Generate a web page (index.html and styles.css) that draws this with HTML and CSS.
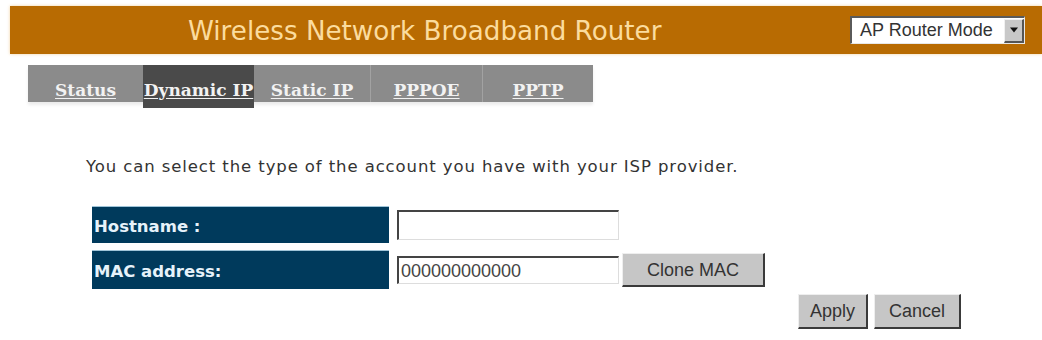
FILE: index.html
```html
<!DOCTYPE html>
<html>
<head>
<meta charset="utf-8">
<link rel="stylesheet" href="styles.css">
</head>
<body>
<div class="header">
  <div class="title">Wireless Network Broadband Router</div>
  <div class="mode-select">
    <span class="mode-text">AP Router Mode</span>
    <span class="mode-arrow"><svg width="10" height="6" viewBox="0 0 10 6"><path d="M1 0.5 L9 0.5 L5 5.5 Z" fill="#111"/></svg></span>
  </div>
</div>
<div class="tabs">
  <a class="tab t1">Status</a>
  <a class="tab t2 active">Dynamic IP</a>
  <a class="tab t3">Static IP</a>
  <a class="tab t4 sep">PPPOE</a>
  <a class="tab t5 sep">PPTP</a>
</div>
<p class="desc">You can select the type of the account you have with your ISP provider.</p>
<div class="form">
  <div class="row r1">
    <div class="label">Hostname :</div>
    <div class="input"></div>
  </div>
  <div class="row r2">
    <div class="label">MAC address:</div>
    <div class="input">000000000000</div>
    <div class="btn clone">Clone MAC</div>
  </div>
</div>
<div class="actions">
  <div class="btn apply">Apply</div>
  <div class="btn cancel">Cancel</div>
</div>
</body>
</html>
```
FILE: styles.css
```css
html, body {
  margin: 0;
  padding: 0;
  background: #ffffff;
}
body {
  width: 1042px;
  height: 340px;
  overflow: hidden;
  font-family: "DejaVu Sans", Verdana, sans-serif;
}
.header {
  margin: 6px 0 0 10px;
  height: 48px;
  background: #b86b02;
  display: flex;
  align-items: center;
  box-shadow: 0 0 3px rgba(240, 200, 140, 0.8);
}
.title {
  padding-left: 178px;
  padding-top: 2px;
  font-size: 26.2px;
  color: #fbdc9e;
}
.mode-select {
  margin-left: auto;
  margin-right: 17px;
  width: 175px;
  height: 28px;
  box-sizing: border-box;
  background: #ffffff;
  border-top: 2px solid #5a5a5a;
  border-left: 2px solid #5a5a5a;
  border-bottom: 1px solid #e8e8e8;
  border-right: 1px solid #e8e8e8;
  display: flex;
  align-items: center;
}
.mode-text {
  font-family: "Liberation Sans", Arial, sans-serif;
  font-size: 18px;
  color: #333;
  padding-left: 8px;
  flex: 1;
}
.mode-arrow {
  width: 20px;
  height: 24px;
  box-sizing: border-box;
  background: #c8c8c8;
  border-top: 1px solid #f0f0f0;
  border-left: 1px solid #f0f0f0;
  border-right: 2px solid #555;
  border-bottom: 2px solid #555;
  display: flex;
  align-items: center;
  justify-content: center;
}
.tabs {
  margin: 11px 0 0 28px;
  width: 565px;
  height: 37px;
  background: #8b8b8b;
  display: flex;
  align-items: flex-start;
  box-shadow: 0 3px 3px rgba(0, 0, 0, 0.08);
}
.tab {
  height: 37px;
  display: flex;
  align-items: center;
  justify-content: center;
  font-family: "DejaVu Serif", Georgia, serif;
  font-weight: bold;
  font-size: 17px;
  color: #f2f2f2;
  text-decoration: underline;
  text-underline-offset: 2px;
  box-sizing: border-box;
  padding-top: 12px;
  white-space: nowrap;
}
.t1 { width: 115px; }
.t2 { width: 111px; }
.t3 { width: 116px; }
.t4 { width: 112px; }
.t5 { width: 111px; }
.tab.active {
  background: #4a4a4a;
  height: 43px;
  padding-bottom: 6px;
}
.tab.sep {
  border-left: 1px solid #a2a2a2;
}
.desc {
  margin: 55px 0 0 86px;
  font-size: 16.5px;
  letter-spacing: 0.9px;
  line-height: 20px;
  color: #333;
}
.form {
  margin: 29px 0 0 92px;
  display: flex;
  flex-direction: column;
  gap: 7px;
}
.row {
  display: flex;
  align-items: center;
}
.label {
  width: 297px;
  box-sizing: border-box;
  background: #003a5c;
  border-top: 1px solid #9fc4d8;
  color: #e6f2fa;
  font-weight: bold;
  font-size: 16.5px;
  padding-left: 2px;
  padding-top: 2px;
  display: flex;
  align-items: center;
}
.r1 .label { height: 37px; }
.r2 .label { height: 39px; }
.input {
  margin-left: 8px;
  width: 222px;
  box-sizing: border-box;
  background: #fff;
  border-top: 2px solid #444;
  border-left: 2px solid #444;
  border-bottom: 1px solid #ddd;
  border-right: 1px solid #ddd;
  font-family: "Liberation Sans", Arial, sans-serif;
  font-size: 18px;
  color: #444;
  padding-left: 2px;
  padding-top: 2px;
  display: flex;
  align-items: center;
}
.r1 .input { height: 30px; }
.r2 .input { height: 28px; }
.btn {
  box-sizing: border-box;
  background: #c6c6c6;
  border-top: 1px solid #eeeeee;
  border-left: 1px solid #eeeeee;
  border-right: 2px solid #3a3a3a;
  border-bottom: 2px solid #3a3a3a;
  font-family: "Liberation Sans", Arial, sans-serif;
  font-size: 18px;
  color: #333;
  display: flex;
  align-items: center;
  justify-content: center;
}
.clone {
  margin-left: 3px;
  width: 143px;
  height: 34px;
  padding-top: 3px;
}
.actions {
  margin: 5px 0 0 798px;
  display: flex;
  gap: 6px;
}
.apply { width: 70px; height: 35px; }
.cancel { width: 87px; height: 35px; }
```
